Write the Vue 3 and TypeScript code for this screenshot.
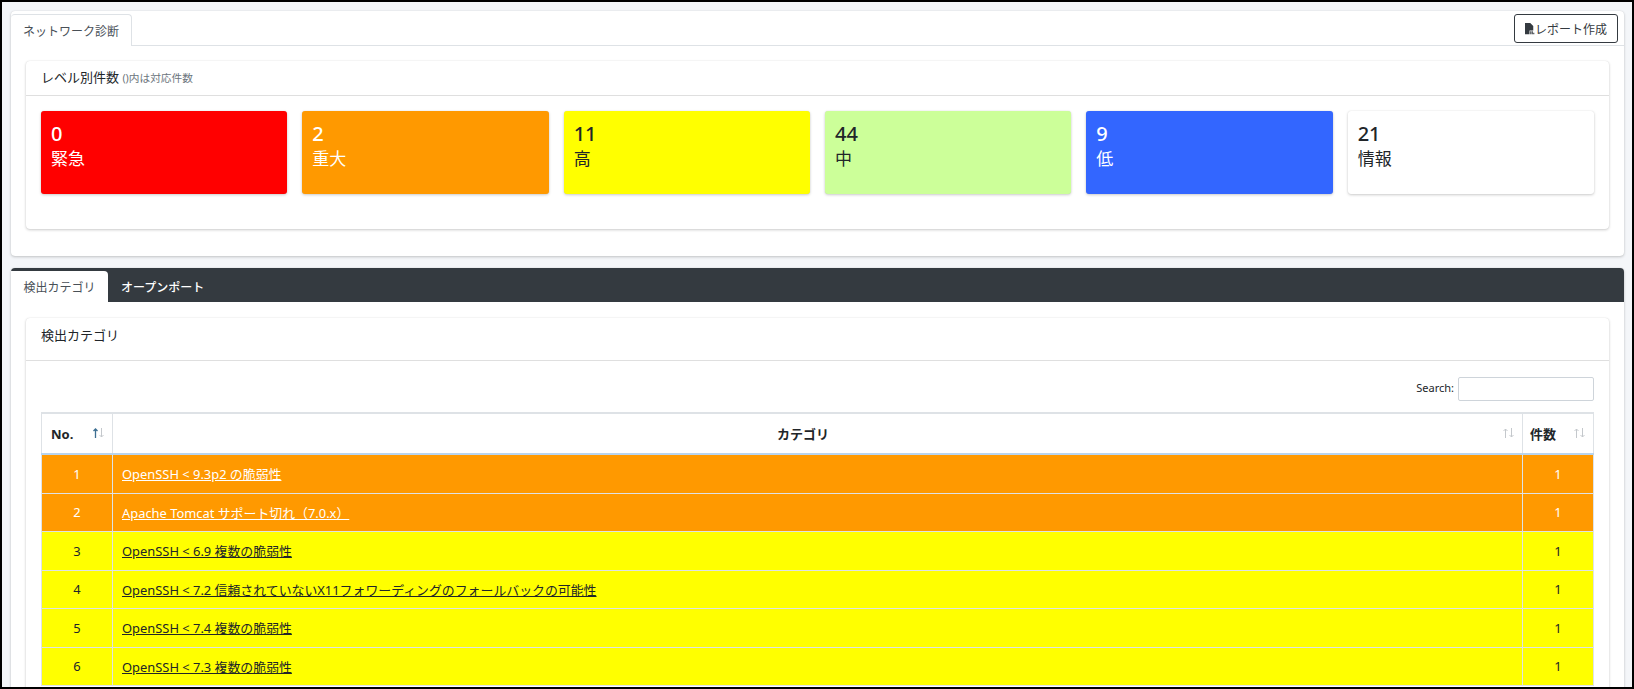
<script setup lang="ts">
interface LevelBox {
  count: number
  label: string
  tone: string
}

interface CategoryRow {
  no: number
  name: string
  count: number
  tone: string
}

const levels: LevelBox[] = [
  { count: 0, label: '緊急', tone: 'critical' },
  { count: 2, label: '重大', tone: 'serious' },
  { count: 11, label: '高', tone: 'high' },
  { count: 44, label: '中', tone: 'medium' },
  { count: 9, label: '低', tone: 'low' },
  { count: 21, label: '情報', tone: 'info' }
]

const rows: CategoryRow[] = [
  { no: 1, name: 'OpenSSH < 9.3p2 の脆弱性', count: 1, tone: 'serious' },
  { no: 2, name: 'Apache Tomcat サポート切れ（7.0.x）', count: 1, tone: 'serious' },
  { no: 3, name: 'OpenSSH < 6.9 複数の脆弱性', count: 1, tone: 'high' },
  { no: 4, name: 'OpenSSH < 7.2 信頼されていないX11フォワーディングのフォールバックの可能性', count: 1, tone: 'high' },
  { no: 5, name: 'OpenSSH < 7.4 複数の脆弱性', count: 1, tone: 'high' },
  { no: 6, name: 'OpenSSH < 7.3 複数の脆弱性', count: 1, tone: 'high' }
]
</script>

<template>
  <div class="page">
    <section class="panel">
      <div class="tab-bar">
        <span class="tab">ネットワーク診断</span>
        <button class="report-btn" type="button">
          <svg class="file-icon" viewBox="0 0 14 16">
            <path d="M1 0h7l4 4v6H7v5H1z" />
            <path d="M8 11h1.4v4H8zM10 11h1.4v4H10zM12 13h1.4v2H12z" />
          </svg>レポート作成
        </button>
      </div>
      <div class="card level-card">
        <div class="card-head level-head">レベル別件数 <small>()内は対応件数</small></div>
        <div class="level-grid">
          <div v-for="box in levels" :key="box.label" class="level-box" :class="box.tone">
            <div class="level-count">{{ box.count }}</div>
            <div class="level-label">{{ box.label }}</div>
          </div>
        </div>
      </div>
    </section>

    <section class="panel lower">
      <div class="dark-bar">
        <span class="dark-tab active">検出カテゴリ</span>
        <span class="dark-tab">オープンポート</span>
      </div>
      <div class="card table-card">
        <div class="card-head table-head">検出カテゴリ</div>
        <div class="table-body">
          <div class="search-row">
            <label for="search">Search:</label>
            <input id="search" type="search" />
          </div>
          <table>
            <thead>
              <tr>
                <th class="col-no">
                  <span>No.</span>
                  <span class="sort">
                    <svg class="arrow on" viewBox="0 0 5 10"><path d="M2.5 10V1M.5 3l2-2 2 2" /></svg>
                    <svg class="arrow" viewBox="0 0 5 10"><path d="M2.5 0v9M.5 7l2 2 2-2" /></svg>
                  </span>
                </th>
                <th class="col-name">
                  <span>カテゴリ</span>
                  <span class="sort">
                    <svg class="arrow" viewBox="0 0 5 10"><path d="M2.5 10V1M.5 3l2-2 2 2" /></svg>
                    <svg class="arrow" viewBox="0 0 5 10"><path d="M2.5 0v9M.5 7l2 2 2-2" /></svg>
                  </span>
                </th>
                <th class="col-count">
                  <span>件数</span>
                  <span class="sort">
                    <svg class="arrow" viewBox="0 0 5 10"><path d="M2.5 10V1M.5 3l2-2 2 2" /></svg>
                    <svg class="arrow" viewBox="0 0 5 10"><path d="M2.5 0v9M.5 7l2 2 2-2" /></svg>
                  </span>
                </th>
              </tr>
            </thead>
            <tbody>
              <tr v-for="row in rows" :key="row.no" :class="row.tone">
                <td class="center">{{ row.no }}</td>
                <td><a href="#">{{ row.name }}</a></td>
                <td class="center">{{ row.count }}</td>
              </tr>
            </tbody>
          </table>
        </div>
      </div>
    </section>
  </div>
</template>

<style>
html,
body {
  margin: 0;
  overflow: hidden;
}
</style>

<style scoped>
.page {
  box-sizing: border-box;
  width: 1634px;
  height: 689px;
  overflow: hidden;
  padding: 9px 8px 0 9px;
  border: 2px solid #000;
  background: #f4f6f9;
  color: #212529;
  font-family: "Noto Sans", "Noto Sans CJK JP", sans-serif;
  font-size: 12px;
}

.panel {
  height: 245px;
  box-sizing: border-box;
  background: #fff;
  border-radius: 4px;
  box-shadow: 0 0 1px rgba(0, 0, 0, 0.125), 0 1px 3px rgba(0, 0, 0, 0.2);
}

.tab-bar {
  display: flex;
  justify-content: space-between;
  height: 35px;
  box-sizing: border-box;
  padding: 3px 6px 0 0;
  border-bottom: 1px solid #dee2e6;
}

.tab {
  box-sizing: border-box;
  width: 121px;
  height: 32px;
  padding-top: 7px;
  text-align: center;
  color: #495057;
  background: #fff;
  border: 1px solid #dee2e6;
  border-left: 0;
  border-bottom: 0;
  border-radius: 4px 4px 0 0;
}

.report-btn {
  display: flex;
  align-items: center;
  justify-content: center;
  box-sizing: border-box;
  width: 104px;
  height: 29px;
  padding: 0 1px 0 0;
  border: 1px solid #343a40;
  border-radius: 3px;
  background: #fff;
  color: #343a40;
  font: inherit;
  font-size: 12px;
}

.file-icon {
  width: 11px;
  height: 12px;
  fill: #343a40;
}

.card {
  background: #fff;
  border-radius: 4px;
  box-shadow: 0 0 1px rgba(0, 0, 0, 0.125), 0 1px 3px rgba(0, 0, 0, 0.2);
}

.level-card {
  height: 168px;
  margin: 15px 15px 0;
}

.card-head {
  box-sizing: border-box;
  border-bottom: 1px solid rgba(0, 0, 0, 0.125);
  padding-left: 15px;
  font-size: 13px;
}

.level-head {
  height: 35px;
  padding-top: 6px;
}

.level-head small {
  font-size: 10.7px;
  color: #6c757d;
}

.level-grid {
  display: grid;
  grid-template-columns: repeat(6, 1fr);
  gap: 15px;
  padding: 15px 15px 0;
}

.level-box {
  height: 83px;
  box-sizing: border-box;
  padding: 10px;
  border-radius: 3px;
  box-shadow: 0 0 1px rgba(0, 0, 0, 0.125), 0 1px 3px rgba(0, 0, 0, 0.2);
}

.level-count {
  font-size: 20px;
  line-height: 26px;
  font-weight: 500;
}

.level-label {
  font-size: 17px;
  line-height: 24px;
}

.critical {
  background: #ff0000;
  color: #fff;
}

.serious {
  background: #ff9900;
  color: #fff;
}

.high {
  background: #ffff00;
  color: #212529;
}

.medium {
  background: #ccff99;
  color: #212529;
}

.low {
  background: #3366ff;
  color: #fff;
}

.info {
  background: #fff;
  color: #212529;
}

.lower {
  height: 500px;
  margin-top: 12px;
}

.dark-bar {
  display: flex;
  align-items: flex-end;
  height: 34px;
  box-sizing: border-box;
  background: #343a40;
  border-radius: 4px 4px 0 0;
}

.dark-tab {
  box-sizing: border-box;
  height: 31px;
  padding: 7px 13px 0;
  color: #fff;
  font-weight: 500;
}

.dark-tab.active {
  width: 97px;
  padding: 7px 0 0;
  text-align: center;
  color: #495057;
  font-weight: 400;
  background: #fff;
  border-radius: 0 4px 0 0;
}

.table-card {
  margin: 16px 15px 0;
}

.table-head {
  height: 43px;
  padding-top: 7px;
}

.table-body {
  padding: 16px 15px 15px;
}

.search-row {
  display: flex;
  justify-content: flex-end;
  align-items: center;
  gap: 4px;
  height: 24px;
  margin-bottom: 11px;
  font-size: 11px;
}

.search-row label {
  padding-bottom: 3px;
}

.search-row input {
  box-sizing: border-box;
  width: 136px;
  height: 24px;
  border: 1px solid #ced4da;
  border-radius: 2px;
  background: #fff;
  outline: 0;
}

table {
  width: 100%;
  table-layout: fixed;
  border-collapse: collapse;
  border-top: 2px solid #dee2e6;
}

th,
td {
  border: 1px solid #dee2e6;
}

th {
  position: relative;
  box-sizing: border-box;
  height: 41px;
  padding: 0 9px;
  border-bottom: 2px solid #b8d4ee;
  font-size: 13px;
  font-weight: 700;
  text-align: center;
}

.col-no {
  width: 71px;
  text-align: left;
}

.col-name {
  padding-right: 38px;
}

.col-count {
  width: 71px;
  padding-left: 7px;
  text-align: left;
}

.sort {
  position: absolute;
  top: 14px;
  right: 8px;
  display: flex;
  gap: 1px;
}

.arrow {
  width: 5px;
  height: 10px;
  fill: none;
  stroke: #c4c8cc;
  stroke-width: 1;
}

.arrow.on {
  stroke: #3d6f92;
  stroke-width: 1.3;
}

td {
  height: 38px;
  box-sizing: border-box;
  padding: 0 9px;
  font-size: 12.9px;
}

tbody tr:nth-child(odd) td {
  height: 39px;
}

td.center {
  text-align: center;
}

td a {
  color: inherit;
  text-decoration: underline;
}
</style>
